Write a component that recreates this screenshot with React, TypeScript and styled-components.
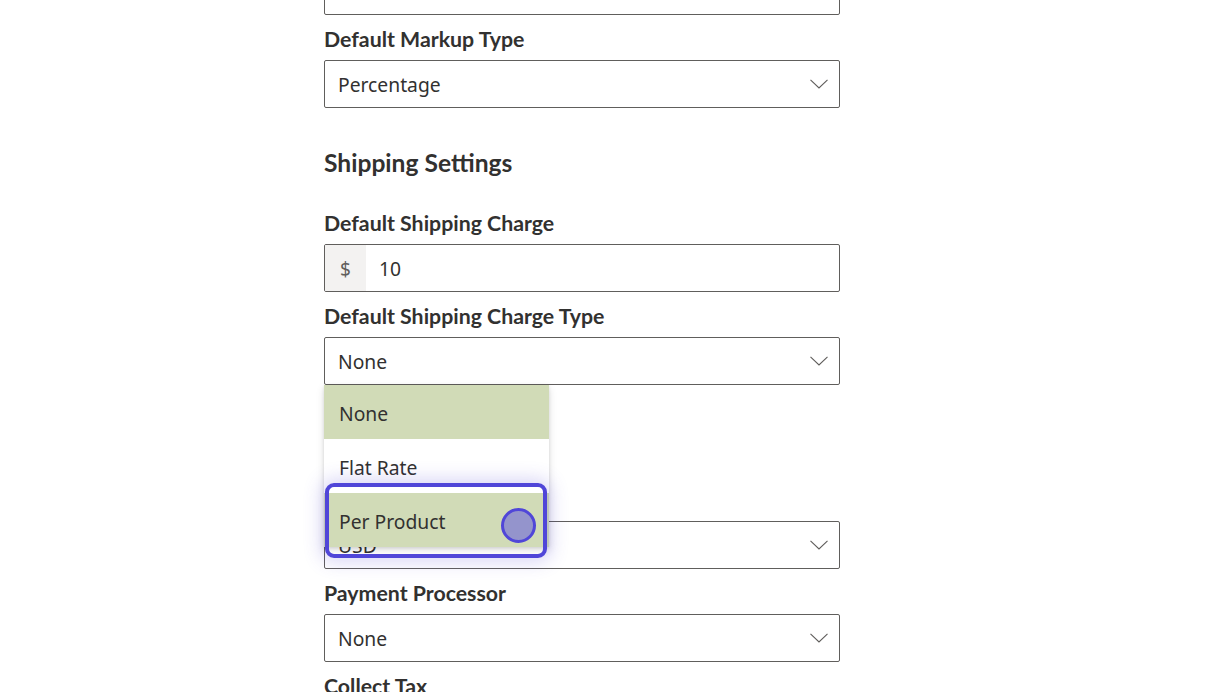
import styled, { createGlobalStyle } from "styled-components";

const GlobalStyle = createGlobalStyle`
  html, body {
    margin: 0;
    padding: 0;
    background: #ffffff;
    overflow: hidden;
  }
  body {
    font-family: "Noto Sans", "Open Sans", sans-serif;
    color: #323130;
  }
`;

function Chevron() {
  return (
    <svg width="18" height="10" viewBox="0 0 18 10" fill="none">
      <path d="M0.5 0.8 L9 9 L17.5 0.8" stroke="#605e5c" strokeWidth="1.1" />
    </svg>
  );
}

function Select({ value }: { value: string }) {
  return (
    <Box>
      <Value>{value}</Value>
      <Caret>
        <Chevron />
      </Caret>
    </Box>
  );
}

export default function App() {
  return (
    <>
      <GlobalStyle />
      <Page>
        <Form>
          <Select value="" />
          <Label>Default Markup Type</Label>
          <Select value="Percentage" />

          <Heading>Shipping Settings</Heading>
          <Label>Default Shipping Charge</Label>
          <Box>
            <Prefix>$</Prefix>
            <Value>10</Value>
          </Box>
          <Label>Default Shipping Charge Type</Label>
          <DropdownAnchor>
            <Select value="None" />
            <Menu>
              <Option $active>None</Option>
              <Option>Flat Rate</Option>
              <Option $active>Per Product</Option>
              <FocusRing />
              <Pointer />
            </Menu>
          </DropdownAnchor>

          <Heading>Payment Settings</Heading>
          <Label>Currency</Label>
          <Select value="USD" />
          <Label>Payment Processor</Label>
          <Select value="None" />
          <Label>Collect Tax</Label>
          <Select value="No" />
        </Form>
      </Page>
    </>
  );
}

const Page = styled.div`
  width: 1215px;
  height: 692px;
  overflow: hidden;
`;

const Form = styled.div`
  display: flex;
  flex-direction: column;
  width: 516px;
  margin-left: 324px;
  margin-top: -33px;
`;

const Label = styled.label`
  font-family: "Lato", sans-serif;
  font-weight: 700;
  font-size: 21.3px;
  line-height: 28px;
  color: #323130;
  margin: 10px 0 7px;
`;

const Heading = styled.h2`
  font-family: "Lato", sans-serif;
  font-weight: 700;
  font-size: 24.6px;
  line-height: 32px;
  color: #323130;
  margin: 39px 0 20px;
`;

const Box = styled.div`
  box-sizing: border-box;
  height: 48px;
  display: flex;
  align-items: center;
  border: 1px solid #605e5c;
  border-radius: 2px;
  background: #ffffff;
  overflow: hidden;
`;

const Value = styled.span`
  flex: 1;
  padding: 1px 0 0 13px;
  font-size: 19.3px;
  color: #323130;
`;

const Prefix = styled.span`
  align-self: stretch;
  width: 41px;
  display: flex;
  align-items: center;
  justify-content: center;
  padding-top: 1px;
  background: #f3f2f1;
  color: #605e5c;
  font-size: 19px;
`;

const Caret = styled.span`
  display: flex;
  padding-right: 11px;
`;

const DropdownAnchor = styled.div`
  position: relative;
`;

const Menu = styled.div`
  position: absolute;
  left: 0;
  top: 48px;
  width: 225px;
  background: #ffffff;
  box-shadow: 0 3px 8px rgba(0, 0, 0, 0.13), 0 1px 3px rgba(0, 0, 0, 0.1);
  z-index: 2;
`;

const Option = styled.div<{ $active?: boolean }>`
  height: 54px;
  display: flex;
  align-items: center;
  padding: 2px 0 0 15px;
  box-sizing: border-box;
  font-size: 19.3px;
  color: #323130;
  background: ${(p) => (p.$active ? "#d1dbb7" : "#ffffff")};
`;

const FocusRing = styled.div`
  position: absolute;
  left: 1px;
  top: 98px;
  width: 222px;
  height: 75px;
  box-sizing: border-box;
  border: 4px solid #5046d8;
  border-radius: 9px;
  box-shadow: 0 0 18px 4px rgba(80, 70, 216, 0.22);
  pointer-events: none;
`;

const Pointer = styled.div`
  position: absolute;
  left: 177px;
  top: 123px;
  width: 35px;
  height: 35px;
  box-sizing: border-box;
  border-radius: 50%;
  border: 3px solid #5046d8;
  background: #9494cc;
`;
